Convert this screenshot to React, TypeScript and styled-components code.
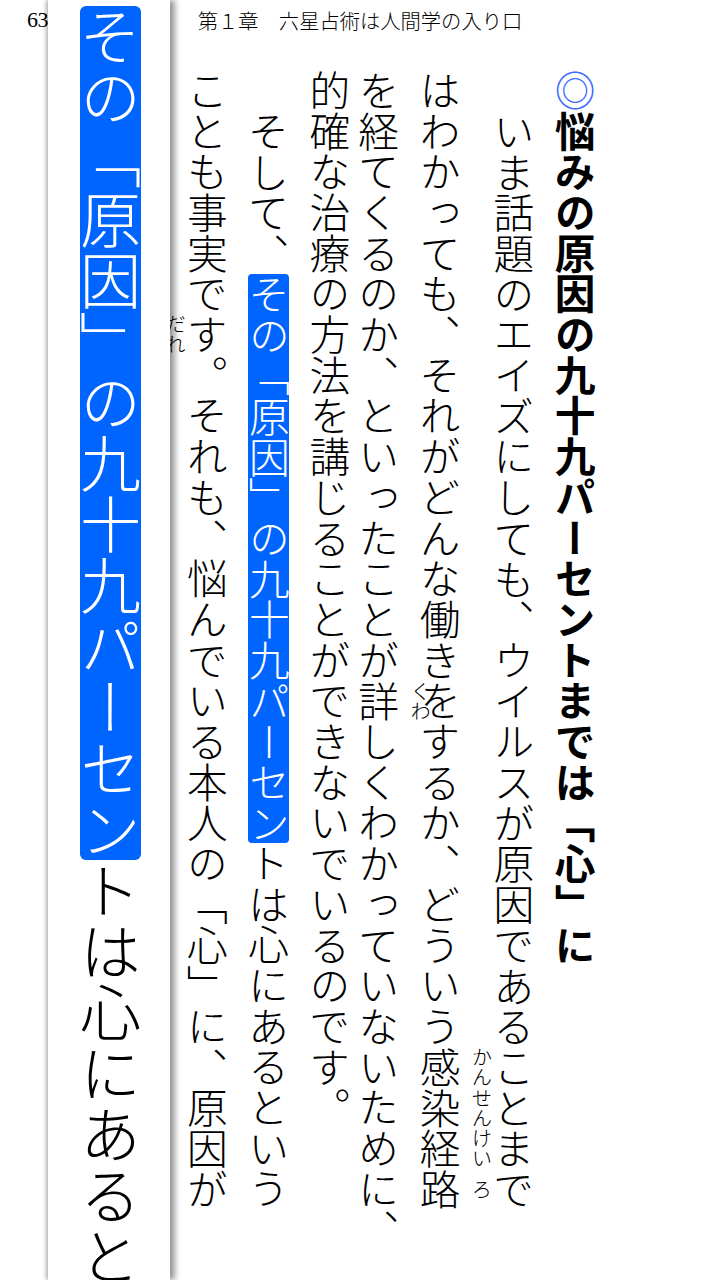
import React from "react";
import styled, { createGlobalStyle } from "styled-components";

const FS = 40.7; // body font size
const PITCH = 61.33; // column pitch
const MAG_FS = 61; // magnifier font size

const GlobalStyle = createGlobalStyle`
  html, body {
    margin: 0;
    padding: 0;
    background: #ffffff;
  }
  body {
    font-family: "Noto Sans CJK JP", "Noto Sans", sans-serif;
    color: #000;
  }
`;

const Page = styled.div`
  position: relative;
  width: 720px;
  height: 1280px;
  overflow: hidden;
  background: #ffffff;
`;

const Header = styled.header`
  display: grid;
  grid-template-columns: 1fr auto 1fr;
  align-items: center;
  height: 40px;
`;

const PageNo = styled.div`
  justify-self: start;
  padding-left: 27px;
  font-family: "Liberation Serif", serif;
  font-size: 22px;
  line-height: 1;
  letter-spacing: -0.5px;
`;

const Title = styled.div`
  font-family: "Noto Sans CJK JP", sans-serif;
  font-weight: 300;
  font-size: 20.3px;
  line-height: 1;
  white-space: nowrap;
`;

const TextArea = styled.main`
  display: flex;
  flex-direction: row-reverse;
  padding: 30px 114.3px 0 0;
  height: 1210px;
`;

const Column = styled.div<{ $pitch: number; $indent?: number }>`
  flex: none;
  display: flex;
  flex-direction: column;
  align-items: center;
  width: ${(p) => p.$pitch}px;
  padding-top: ${(p) => p.$indent ?? 0}px;
`;

const Run = styled.div<{ $size: number; $pitch: number; $bold?: boolean }>`
  writing-mode: vertical-rl;
  text-orientation: mixed;
  white-space: nowrap;
  font-family: "Noto Sans CJK JP", sans-serif;
  font-size: ${(p) => p.$size}px;
  line-height: ${(p) => p.$pitch}px;
  width: ${(p) => p.$pitch}px;
  font-weight: ${(p) => (p.$bold ? 700 : 300)};

  ruby {
    ruby-position: over;
  }
  rt {
    position: relative;
    left: 10px;
    font-size: 0.5em;
    font-weight: 300;
  }
`;

const Mark = styled.div<{ $size: number; $radius: number }>`
  writing-mode: vertical-rl;
  text-orientation: mixed;
  white-space: nowrap;
  font-family: "Noto Sans CJK JP", sans-serif;
  font-weight: 300;
  font-size: ${(p) => p.$size}px;
  line-height: ${(p) => p.$size}px;
  width: ${(p) => p.$size}px;
  background: #0064ff;
  color: #ffffff;
  border-radius: ${(p) => p.$radius}px;
`;

const Bullet = styled.span`
  color: #3d6bff;
  font-weight: 400;
`;

const Magnifier = styled.aside`
  position: absolute;
  top: 0;
  left: 48px;
  width: 122px;
  height: 100%;
  box-sizing: border-box;
  padding: 6px 0 0 3px;
  background: #ffffff;
  display: flex;
  justify-content: center;
  overflow: hidden;
  box-shadow: 5px 0 6px rgba(0, 0, 0, 0.4), -2px 0 4px rgba(0, 0, 0, 0.3);
  z-index: 2;
`;

const Body = ({ children }: { children: React.ReactNode }) => (
  <Run $size={FS} $pitch={PITCH}>
    {children}
  </Run>
);

export default function App() {
  return (
    <>
      <GlobalStyle />
      <Page>
        <Header>
          <PageNo>63</PageNo>
          <Title>第１章　六星占術は人間学の入り口</Title>
          <div />
        </Header>

        <TextArea>
          <Column $pitch={PITCH}>
            <Run $size={FS} $pitch={PITCH} $bold>
              <Bullet>◎</Bullet>悩みの原因の九十九パーセントまでは「心」に
            </Run>
          </Column>

          <Column $pitch={PITCH} $indent={FS}>
            <Body>いま話題のエイズにしても、ウイルスが原因であることまで</Body>
          </Column>

          <Column $pitch={PITCH}>
            <Body>
              はわかっても、それがどんな働きをするか、どういう
              <ruby>
                感<rt>かん</rt>
              </ruby>
              <ruby>
                染<rt>せん</rt>
              </ruby>
              <ruby>
                経<rt>けい</rt>
              </ruby>
              <ruby>
                路<rt>ろ</rt>
              </ruby>
            </Body>
          </Column>

          <Column $pitch={PITCH}>
            <Body>
              を経てくるのか、といったことが
              <ruby>
                詳<rt>くわ</rt>
              </ruby>
              しくわかっていないために、
            </Body>
          </Column>

          <Column $pitch={PITCH}>
            <Body>的確な治療の方法を講じることができないでいるのです。</Body>
          </Column>

          <Column $pitch={PITCH} $indent={FS}>
            <Body>そして、</Body>
            <Mark $size={FS} $radius={4}>
              その「原因」の九十九パーセン
            </Mark>
            <Body>トは心にあるという</Body>
          </Column>

          <Column $pitch={PITCH}>
            <Body>ことも事実です。それも、悩んでいる本人の「心」に、原因が</Body>
          </Column>

          <Column $pitch={PITCH}>
            <Body>
              あるのです。
              <ruby>
                誰<rt>だれ</rt>
              </ruby>
              もが悩みの原因を外に求めますが
            </Body>
          </Column>
        </TextArea>

        <Magnifier>
          <Column $pitch={MAG_FS}>
            <Mark $size={MAG_FS} $radius={6}>
              その「原因」の九十九パーセン
            </Mark>
            <Run $size={MAG_FS} $pitch={MAG_FS}>
              トは心にあるという
            </Run>
          </Column>
        </Magnifier>
      </Page>
    </>
  );
}
